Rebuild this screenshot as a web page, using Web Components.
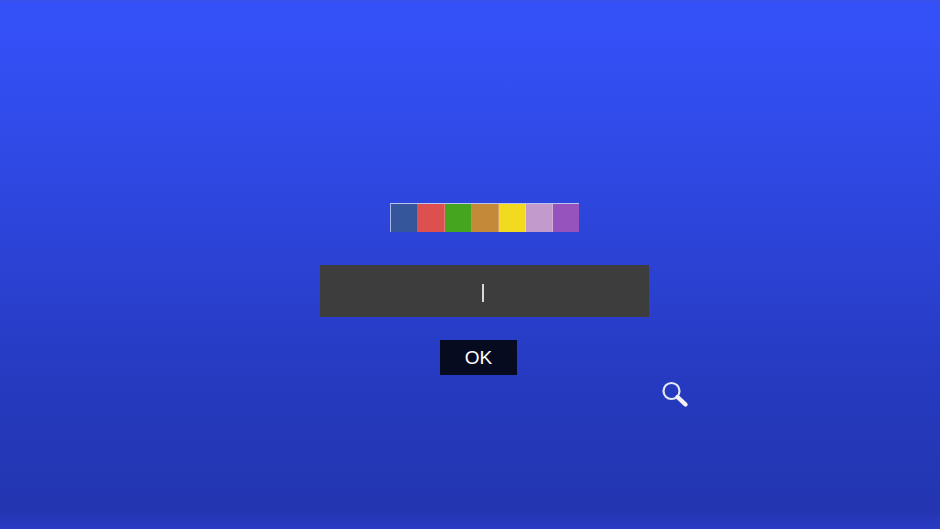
<!DOCTYPE html>
<html><head><meta charset="utf-8"><style>
html,body{margin:0;height:100%;overflow:hidden}
body{font-family:"Liberation Sans",Arial,sans-serif}
</style></head><body>
<app-screen>
<colour-strip></colour-strip>
<text-field></text-field>
<ok-button>OK</ok-button>
<search-cursor></search-cursor>
</app-screen>
<script>
function def(name,html){customElements.define(name,class extends HTMLElement{constructor(){super();this.attachShadow({mode:'open'}).innerHTML=html}})}
def('app-screen',`<style>:host{display:flex;flex-direction:column;align-items:center;box-sizing:border-box;width:940px;height:529px;padding:203px 0 0 29px;position:relative;
background:linear-gradient(180deg,#3a50e8 0,#3450f8 3px,#3450f6 40px,#2f49e4 160px,#2a40cf 290px,#2539bd 400px,#2335b0 510px,#2a3bc4 529px)}</style><slot></slot>`);
const cols=['#36569b','#dc5050','#45a51e','#c48a3a','#f2da20','#c29acb','#9652bd'];
def('colour-strip',`<style>:host{display:flex;height:29px;box-sizing:border-box;border-top:1px solid #b9c4f2;border-left:1px solid #a9b6f0}
i{display:block;width:27px;box-sizing:border-box;border-right:1px solid rgba(255,255,255,.22)}i:last-child{border-right:0;width:26px}</style>`+cols.map(c=>`<i style="background:${c}"></i>`).join(''));
def('text-field',`<style>:host{display:flex;align-items:center;justify-content:center;box-sizing:border-box;width:329px;height:52px;margin-top:33px;background:#3d3d3d;padding-top:3px}
b{display:block;width:2px;height:18px;background:#d8d8d8;margin-left:-3px}</style><b></b>`);
def('ok-button',`<style>:host{display:flex;align-items:center;justify-content:center;box-sizing:border-box;width:77px;height:35px;margin:23px 12px 0 0;background:#070b20;color:#fff;font-size:19px;font-family:"Liberation Sans",Arial,sans-serif}</style><slot></slot>`);
def('search-cursor',`<style>:host{position:absolute;left:660px;top:380px;width:30px;height:30px;display:block}svg{display:block}</style>
<svg width="30" height="30" viewBox="0 0 30 30" fill="none"><circle cx="11.5" cy="11" r="8" stroke="#e4e8f2" stroke-width="2.2"/><path d="M17.5 17 L25.5 24.5" stroke="#f2f2f2" stroke-width="4.4" stroke-linecap="round"/></svg>`);
</script></body></html>
